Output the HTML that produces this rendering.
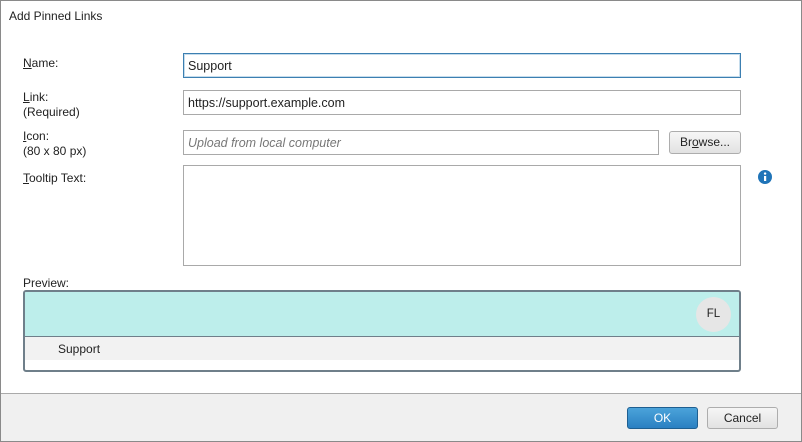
<!DOCTYPE html>
<html><head><style>
body{margin:0;width:802px;height:442px;overflow:hidden;font-family:"Segoe UI","Liberation Sans",sans-serif;font-size:12px;color:#222;background:#fff}
.frame{position:absolute;left:0;top:0;width:800px;height:440px;border:1px solid #8a8a8a;background:#fff}
.w{position:absolute;left:-1px;top:-1px;width:802px;height:442px}
.a{position:absolute}
.lbl{position:absolute;left:22px;line-height:15px}
.inp{position:absolute;border:1px solid #a9a9a9;background:#fff;box-sizing:border-box;padding-left:4px;line-height:24px;font-size:12.5px}
.btn{position:absolute;box-sizing:border-box;border:1px solid #adadad;border-radius:3px;background:linear-gradient(#f6f6f6,#e2e2e2);text-align:center;line-height:20px}
</style></head><body>
<div class="frame"><div class="w">
<div class="a" style="left:9px;top:9px">Add Pinned Links</div>
<div class="lbl" style="left:23px;top:56px"><u>N</u>ame:</div>
<div class="lbl" style="left:23px;top:90px"><u>L</u>ink:<br>(Required)</div>
<div class="lbl" style="left:23px;top:129px"><u>I</u>con:<br>(80 x 80 px)</div>
<div class="lbl" style="left:23px;top:171px"><u>T</u>ooltip Text:</div>
<div class="inp" style="left:183px;top:53px;width:558px;height:25px;border-color:#3c7fb1;box-shadow:inset 0 0 0 1px #c5dcec">Support</div>
<div class="inp" style="left:183px;top:90px;width:558px;height:25px">https://support.example.com</div>
<div class="inp" style="left:183px;top:130px;width:476px;height:25px;color:#777;font-style:italic">Upload from local computer</div>
<div class="btn" style="left:669px;top:131px;width:72px;height:23px">Br<u>o</u>wse...</div>
<div class="inp" style="left:183px;top:165px;width:558px;height:101px"></div>
<svg class="a" style="left:757px;top:169px" width="16" height="16" viewBox="0 0 16 16"><circle cx="8" cy="8" r="7" fill="#1f74b8"/><rect x="7" y="7" width="2.2" height="5" fill="#fff"/><circle cx="8.1" cy="4.6" r="1.2" fill="#fff"/></svg>
<div class="lbl" style="left:23px;top:276px">Preview:</div>
<div class="a" style="left:23px;top:290px;width:714px;height:78px;border:2px solid #6f7f8a;border-radius:3px;background:#fff;overflow:hidden">
<div class="a" style="left:0;top:0;width:714px;height:44px;background:#bdeeeb;border-bottom:1px solid #6f7f8a"></div>
<div class="a" style="left:671px;top:5px;width:35px;height:35px;border-radius:50%;background:#e6e6e6;text-align:center;line-height:35px;font-size:11.5px">FL</div>
<div class="a" style="left:0;top:45px;width:714px;height:23px;background:#f2f2f2;line-height:25px;padding-left:33px;box-sizing:border-box">Support</div>
</div>
<div class="a" style="left:1px;top:393px;width:800px;height:47px;background:#f0f0f0;border-top:1px solid #aaa"></div>
<div class="btn" style="left:627px;top:407px;width:71px;height:22px;background:linear-gradient(#4ba3da,#2a80c2);border-color:#1e5f91;color:#fff">OK</div>
<div class="btn" style="left:707px;top:407px;width:71px;height:22px">Cancel</div>
</div></div>
</body></html>
